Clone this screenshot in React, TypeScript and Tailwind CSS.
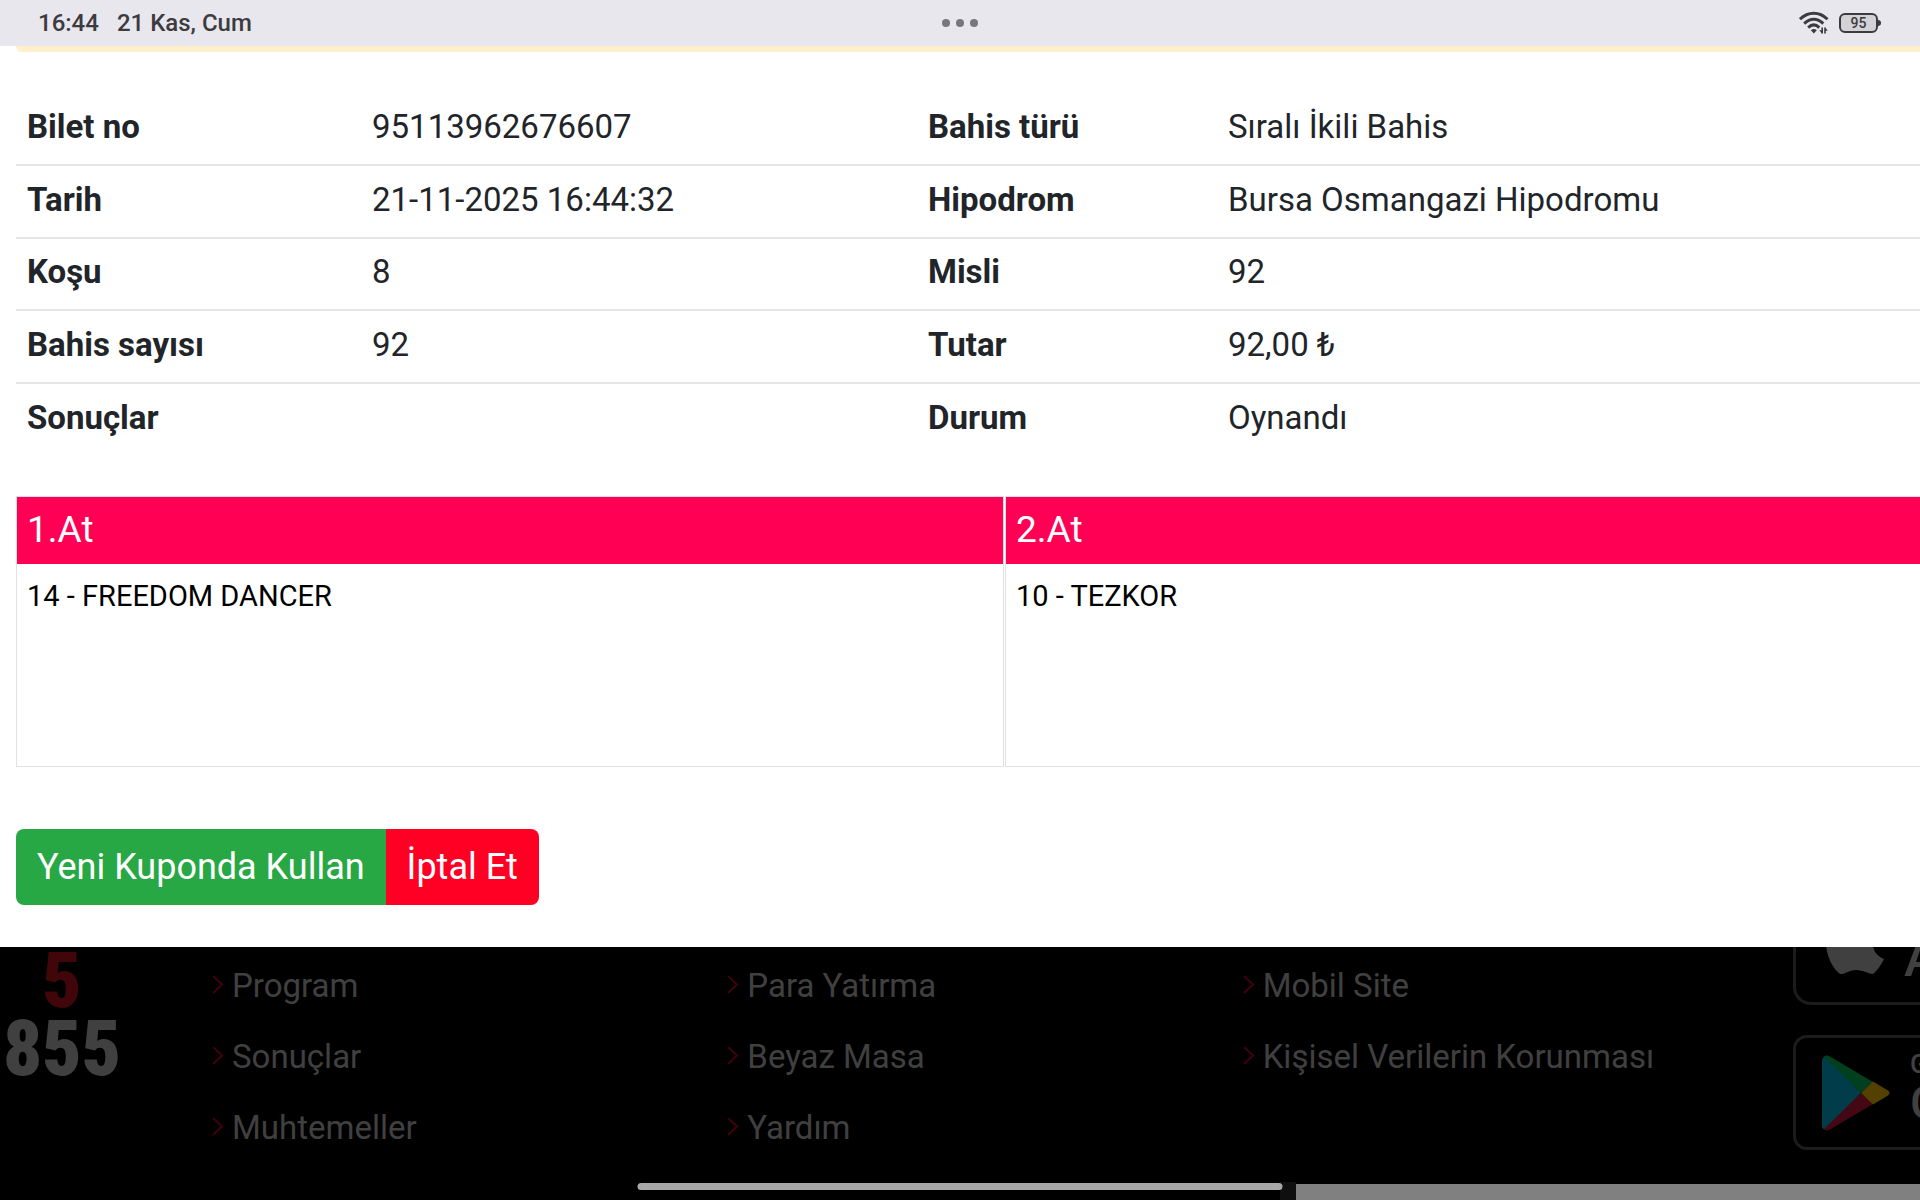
import React from 'react';

interface TicketRow {
  label: string;
  value: string;
  label2: string;
  value2: string;
}

const ticketRows: TicketRow[] = [
  { label: 'Bilet no', value: '95113962676607', label2: 'Bahis türü', value2: 'Sıralı İkili Bahis' },
  { label: 'Tarih', value: '21-11-2025 16:44:32', label2: 'Hipodrom', value2: 'Bursa Osmangazi Hipodromu' },
  { label: 'Koşu', value: '8', label2: 'Misli', value2: '92' },
  { label: 'Bahis sayısı', value: '92', label2: 'Tutar', value2: '92,00 ₺' },
  { label: 'Sonuçlar', value: '', label2: 'Durum', value2: 'Oynandı' },
];

const horses = [
  { title: '1.At', name: '14 - FREEDOM DANCER' },
  { title: '2.At', name: '10 - TEZKOR' },
];

const footerColumns = [
  ['Program', 'Sonuçlar', 'Muhtemeller'],
  ['Para Yatırma', 'Beyaz Masa', 'Yardım'],
  ['Mobil Site', 'Kişisel Verilerin Korunması'],
];

const WifiIcon = () => (
  <svg className="w-[30px] h-6" viewBox="0 0 30 24" fill="none" stroke="#3c3b40" strokeWidth="3">
    <path d="M1 8.2C9 .2 20.500 .2 28.500 8.200" />
    <path d="M5.200 12.600C11 6.800 18.500 6.800 24.300 12.600" />
    <path d="M9.200 16.600C12.700 13.200 16.800 13.200 20.300 16.600" />
    <path d="M11.800 19.200Q14.800 16.800 17.800 19.200L14.800 22.400Z" fill="#3c3b40" stroke="none" />
    <path d="M23.200 16.500V22.500M26 16.500V22.500" strokeWidth="1.600" />
    <path d="M23 22.500L20.300 19.300H23ZM26.200 16.500L28.800 19.700H26.200Z" fill="#3c3b40" stroke="none" />
  </svg>
);

const StatusBar = () => (
  <header className="grid grid-cols-3 items-center h-[46px] shrink-0 bg-[#e8e7ed] px-[38px] text-[24px] font-medium text-[#3c3b40]">
    <div className="flex gap-[18px]">
      <span>16:44</span>
      <span>21 Kas, Cum</span>
    </div>
    <div className="flex justify-center gap-[6px]">
      <span className="w-2 h-2 rounded-full bg-[#78777c]" />
      <span className="w-2 h-2 rounded-full bg-[#78777c]" />
      <span className="w-2 h-2 rounded-full bg-[#78777c]" />
    </div>
    <div className="flex items-center justify-end gap-[10px] pr-px">
      <WifiIcon />
      <div className="flex items-center">
        <span className="flex items-center justify-center w-[39px] h-5 rounded-[6px] border-2 border-[#3c3b40] bg-[#d3d2d7] text-sm leading-none">
          95
        </span>
        <span className="w-[3px] h-[6px] rounded-r-sm bg-[#3c3b40]" />
      </div>
    </div>
  </header>
);

const TicketModal = () => (
  <main className="shrink-0 overflow-hidden bg-white pl-4 pb-[42px] text-[#212529]">
    <div className="h-[6px] rounded-bl-lg bg-[#fdf0cb]" />

    {/* The tables run past the right edge of the window */}
    <div className="w-[calc(100%+74px)] pt-[41px]">
      <table className="w-full h-[362px] table-fixed border-collapse text-left text-[33px] leading-[48px]">
        <colgroup>
          <col className="w-[344px]" />
          <col className="w-[556px]" />
          <col className="w-[300px]" />
          <col />
        </colgroup>
        <tbody>
          {ticketRows.map((row) => (
            <tr key={row.label} className="border-b-2 border-[#e5e6e8] last:border-b-0">
              <th className="pl-[11px] pr-3 pt-0 pb-[3px] font-bold">{row.label}</th>
              <td className="px-3 pt-0 pb-[3px]">{row.value}</td>
              <th className="px-3 pt-0 pb-[3px] font-bold">{row.label2}</th>
              <td className="px-3 pt-0 pb-[3px]">{row.value2}</td>
            </tr>
          ))}
        </tbody>
      </table>

      <div className="flex pt-[41px]">
        {horses.map((horse) => (
          <section key={horse.title} className="flex-1 border border-[#dee2e6] mr-px">
            <h2 className="h-[67px] bg-[#ff0054] px-[10px] text-[37px] leading-[66px] text-white">{horse.title}</h2>
            <p className="h-[202px] px-[10px] py-3 text-[29px] leading-[40px] text-black">{horse.name}</p>
          </section>
        ))}
      </div>
    </div>

    <div className="flex pt-[62px] text-[36px] leading-[52px] text-white">
      <button type="button" className="rounded-l-lg bg-[#28a745] px-[21px] py-3">
        Yeni Kuponda Kullan
      </button>
      <button type="button" className="rounded-r-lg bg-[#ff0024] px-[21px] py-3">
        İptal Et
      </button>
    </div>
  </main>
);

const AppleLogo = () => (
  <svg className="w-[58px] h-[68px]" viewBox="0 0 58 68" fill="#404040">
    <path d="M57 23C50 27 47 32 47 38C47 45 51 50 58 53C55 59 51 65 47 68C43 68 37 64 30 64C23 64 18 69 14 68C6 62 0 49 0 36C0 22 9 14 18 14C23 14 27 18 31 18C35 18 38 14 44 14C49 14 54 17 57 23Z" />
    <path d="M42 0C42 8 36 14 30 13C30 6 36 1 42 0Z" />
  </svg>
);

const PlayLogo = () => (
  <svg className="w-[68px] h-[76px]" viewBox="0 0 68 76">
    <path d="M1 3Q3 0 5 1L39 38L5 75Q1 75 0 72V5Z" fill="#003c49" />
    <path d="M2 2Q4-.5 8 1.500L51 27L39 38Z" fill="#00401e" />
    <path d="M2 74Q4 76.500 8 74.500L51 49L39 38Z" fill="#430813" />
    <path d="M51 26.500L66 35.500Q69 38 66 40.500L51 49.500L39 38Z" fill="#544100" />
  </svg>
);

const Footer = () => (
  <footer className="flex flex-1 overflow-hidden bg-black text-[#404040]">
    <div className="w-[208px] shrink-0 font-['Roboto_Condensed','Roboto',sans-serif] text-[77px] leading-[68px] font-black">
      <div className="flex w-[124px] flex-col items-center">
        <span className="text-[#40060a]">5</span>
        <span>855</span>
      </div>
    </div>

    <nav className="grid flex-1 grid-cols-3">
      {footerColumns.map((links) => (
        <ul key={links[0]} className="flex flex-col gap-5 pt-[13px]">
          {links.map((link) => (
            <li key={link}>
              <a href="#" className="flex items-center gap-2 whitespace-nowrap text-[33px] leading-[51px]">
                <svg className="w-4 h-5" viewBox="0 0 16 20" fill="none" stroke="#400010" strokeWidth="2">
                  <path d="M5 0L14 8.500L5 17" />
                </svg>
                {link}
              </a>
            </li>
          ))}
        </ul>
      ))}
    </nav>

    <div className="w-[166px] shrink-0 overflow-hidden pl-[39px]">
      <a
        href="#"
        aria-label="App Store"
        className="flex h-[58px] w-[384px] items-end gap-5 rounded-b-[18px] border-3 border-t-0 border-[#1c1c1c] pl-[30px] pb-[28px]"
      >
        <AppleLogo />
        <span className="text-[52px] leading-[30px] font-medium">App Store</span>
      </a>
      <a
        href="#"
        aria-label="Google Play"
        className="mt-[30px] flex h-[115px] w-[384px] items-center gap-5 rounded-[14px] border-3 border-[#1c1c1c] pl-[26px]"
      >
        <PlayLogo />
        <span className="flex flex-col pb-3 font-medium">
          <span className="text-[26px] leading-8">GET IT ON</span>
          <span className="text-[46px] leading-[46px]">Google Play</span>
        </span>
      </a>
    </div>
  </footer>
);

const App: React.FC = () => {
  return (
    <div
      lang="tr"
      className="relative flex min-h-screen flex-col overflow-hidden bg-black font-['Roboto','Liberation_Sans',sans-serif]"
    >
      <StatusBar />
      <TicketModal />
      <Footer />

      {/* Home indicator and scrollbar lie over the page */}
      <div className="absolute bottom-0 right-0 h-4 w-[624px] bg-[#808080]" />
      <div className="absolute bottom-0 right-[624px] h-[18px] w-4 bg-[#0f0f0f]" />
      <div className="absolute bottom-[10px] left-1/2 h-[7px] w-[645px] -translate-x-1/2 rounded-full bg-[#a8a8a8]" />
    </div>
  );
};

export default App;
